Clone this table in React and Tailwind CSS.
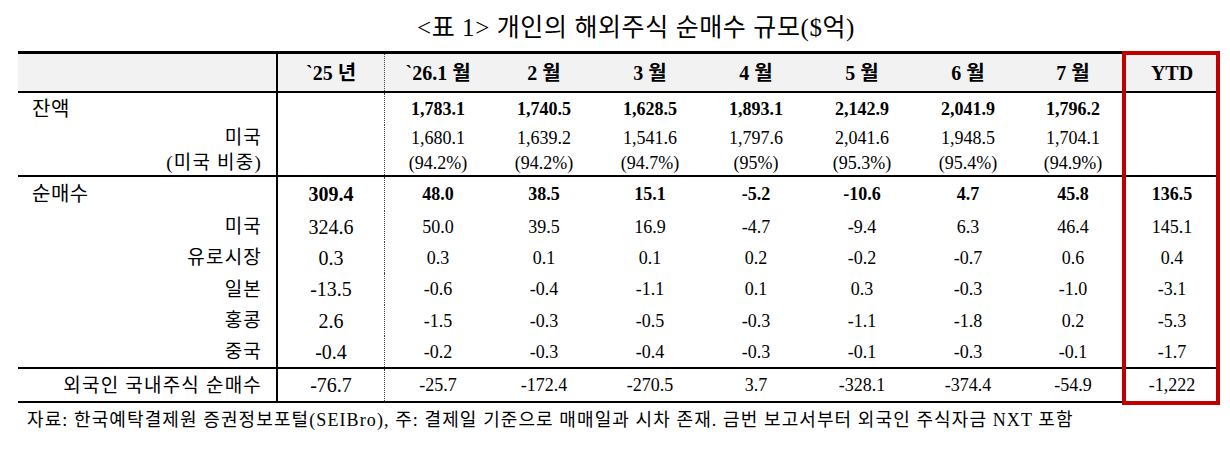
const serif = "font-['Liberation_Serif','Noto_Sans_CJK_KR',serif]";

const heads = ["`25 년", "`26.1 월", "2 월", "3 월", "4 월", "5 월", "6 월", "7 월", "YTD"];

const sections = [
  [
    { label: "잔액", main: true, h: "h-[32px]", bold: true, values: ["", "1,783.1", "1,740.5", "1,628.5", "1,893.1", "2,142.9", "2,041.9", "1,796.2", ""] },
    { label: "미국", h: "h-[25px]", values: ["", "1,680.1", "1,639.2", "1,541.6", "1,797.6", "2,041.6", "1,948.5", "1,704.1", ""] },
    { label: "(미국 비중)", h: "h-[27px]", values: ["", "(94.2%)", "(94.2%)", "(94.7%)", "(95%)", "(95.3%)", "(95.4%)", "(94.9%)", ""] },
  ],
  [
    { label: "순매수", main: true, h: "h-[34px]", bold: true, values: ["309.4", "48.0", "38.5", "15.1", "-5.2", "-10.6", "4.7", "45.8", "136.5"] },
    { label: "미국", h: "h-[31px]", values: ["324.6", "50.0", "39.5", "16.9", "-4.7", "-9.4", "6.3", "46.4", "145.1"] },
    { label: "유로시장", h: "h-[31px]", values: ["0.3", "0.3", "0.1", "0.1", "0.2", "-0.2", "-0.7", "0.6", "0.4"] },
    { label: "일본", h: "h-[32px]", values: ["-13.5", "-0.6", "-0.4", "-1.1", "0.1", "0.3", "-0.3", "-1.0", "-3.1"] },
    { label: "홍콩", h: "h-[31px]", values: ["2.6", "-1.5", "-0.3", "-0.5", "-0.3", "-1.1", "-1.8", "0.2", "-5.3"] },
    { label: "중국", h: "h-[33px]", values: ["-0.4", "-0.2", "-0.3", "-0.4", "-0.3", "-0.1", "-0.3", "-0.1", "-1.7"] },
  ],
  [
    { label: "외국인 국내주식 순매수", h: "h-[34px]", values: ["-76.7", "-25.7", "-172.4", "-270.5", "3.7", "-328.1", "-374.4", "-54.9", "-1,222"] },
  ],
];

const grid = "grid grid-cols-[260px_107px_106px_106px_106px_106px_106px_106px_104px_94px]";

function Row({ row, last }) {
  return (
    <div className={`${grid} ${row.h} ${last ? "border-b-2 border-black" : ""}`}>
      <div
        className={`flex items-center border-r-2 border-black ${
          row.main
            ? "justify-start pl-[14px] text-[20px] tracking-[0.5px]"
            : "justify-end pr-[14px] text-[19px] tracking-[1.2px]"
        }`}
      >
        {row.label}
      </div>
      {row.values.map((v, i) => (
        <div
          key={i}
          className={`flex items-center justify-center ${row.bold ? "font-bold" : ""} ${
            i === 0 ? "border-r border-dotted border-[#444] text-[20px]" : "text-[18px]"
          }`}
        >
          {v}
        </div>
      ))}
    </div>
  );
}

export default function App() {
  return (
    <div className={`w-[1230px] h-[456px] bg-white text-black leading-none ${serif}`}>
      <div className="h-[51px] flex items-center justify-center pl-[42px] pt-[3px] text-[25px] tracking-[0.6px]">
        &lt;표 1&gt; 개인의 해외주식 순매수 규모($억)
      </div>

      <div className="relative ml-[18px] w-[1201px]">
        <div className={`${grid} h-[42px] border-t-[3px] border-b-2 border-black bg-[#f2f2f2] text-[20px] font-bold`}>
          <div className="border-r-2 border-black" />
          {heads.map((h, i) => (
            <div
              key={h}
              className={`flex items-center justify-center ${i === 0 ? "border-r border-dotted border-[#444]" : ""}`}
            >
              {h}
            </div>
          ))}
        </div>

        {sections.map((rows, si) => (
          <div key={si}>
            {rows.map((row, ri) => (
              <Row key={ri} row={row} last={ri === rows.length - 1} />
            ))}
          </div>
        ))}

        <div className="pointer-events-none absolute left-[1104px] top-0 w-[98px] h-[354px] border-4 border-[#c00000]" />
      </div>

      <div className="h-[34px] flex items-center pl-[27px] text-[18px] tracking-[1.1px]">
        자료: 한국예탁결제원 증권정보포털(SEIBro), 주: 결제일 기준으로 매매일과 시차 존재. 금번 보고서부터 외국인 주식자금 NXT 포함
      </div>
    </div>
  );
}
